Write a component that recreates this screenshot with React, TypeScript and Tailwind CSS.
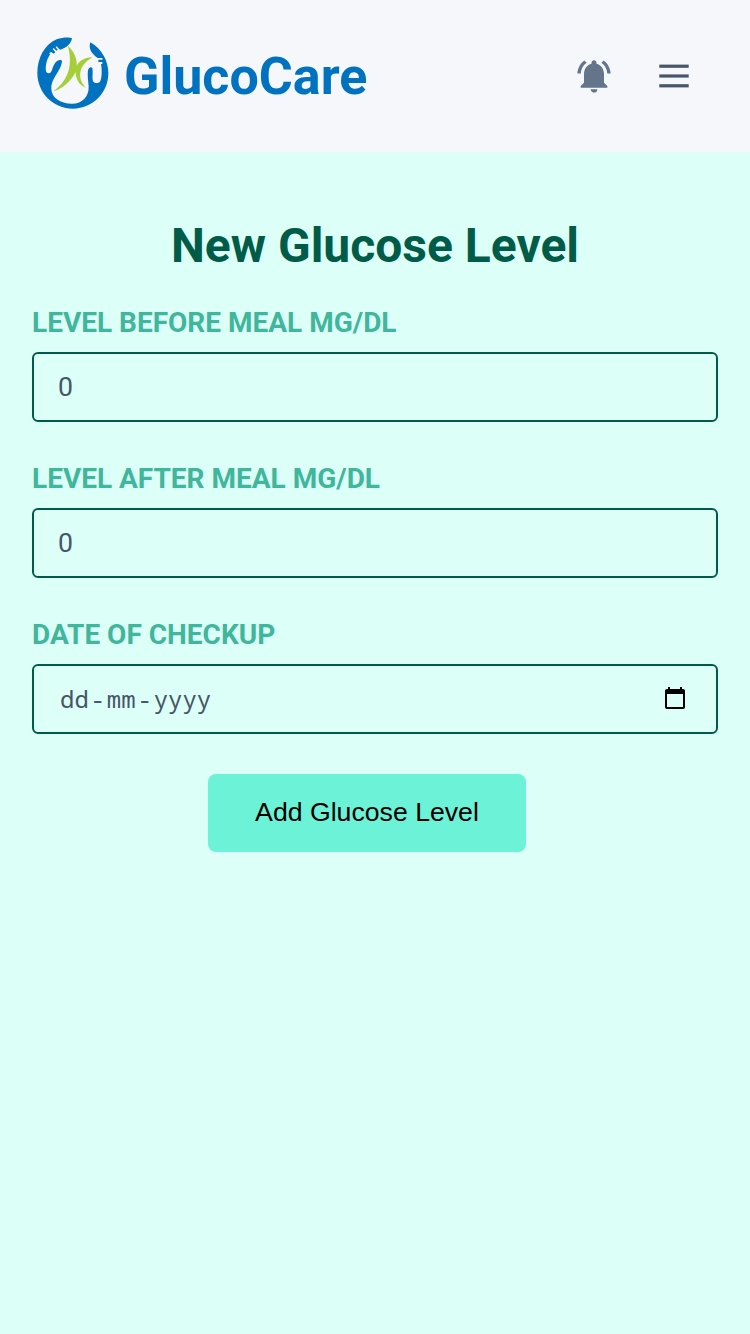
import React from "react";
import { MdNotificationsActive } from "react-icons/md";

function Logo() {
  return (
    <svg viewBox="0 0 255 255" className="size-[85px] shrink-0" aria-hidden="true">
      <path
        fill="#0072bf"
        d="M126 25C119 21 97 22 80 28C44 43 22 84 22 129C22 188 69 236 129 236C188 236 235 188 235 130C235 95 217 57 181 37C175 54 183 70 203 84H217V89H205V96H217V102H213C217 124 215 150 209 156C204 161 194 160 190 155C185 148 190 128 187 115C185 110 178 111 175 118C171 130 175 155 176 170C177 198 158 221 126 221C90 221 65 203 64 177C63 158 73 143 83 127C91 114 98 98 95 91C88 88 77 93 72 104C66 115 66 129 56 130C46 130 46 115 49 100C51 89 55 80 60 74L58 69L64 66L71 71L76 67L68 57L71 54L79 62L83 59L77 52L80 49L90 59C108 55 123 42 126 25Z"
      />
      <path
        fill="#a6ce39"
        d="M113 47C120 68 122 94 117 117C111 143 94 166 70 184C98 177 124 151 137 126C137 145 145 164 168 174C153 158 149 145 151 127C154 109 167 95 187 82C165 81 149 92 140 107C142 86 132 63 113 47Z"
      />
    </svg>
  );
}

function MenuIcon() {
  return (
    <svg viewBox="0 0 40 40" className="size-10 fill-[#475569]" aria-hidden="true">
      <rect x="5.3" y="8.6" width="29.4" height="3.2" />
      <rect x="5.3" y="18.4" width="29.4" height="3.2" />
      <rect x="5.3" y="28.2" width="29.4" height="3.2" />
    </svg>
  );
}

const labelClass =
  "block pt-px text-[28px] leading-10 font-bold uppercase text-[#40b69c]";
const inputClass =
  "mt-[9px] block h-[70px] w-full rounded-[6px] border-2 border-[#005c48] bg-transparent px-6 text-[26.67px] text-[#475569] outline-none placeholder:text-[#475569]";

function LevelField({ id, label }: { id: string; label: string }) {
  return (
    <div>
      <label htmlFor={id} className={labelClass}>{label}</label>
      <input id={id} type="text" inputMode="numeric" defaultValue="0" className={inputClass} />
    </div>
  );
}

export default function App() {
  return (
    <div className="min-h-screen bg-[#dcfff7] font-['Roboto',sans-serif]">
      <header className="flex h-[152px] items-center justify-between bg-[#f5f7fb] pr-14 pl-[30px]">
        <div className="flex items-center gap-[9px]">
          <div className="pb-[7px]"><Logo /></div>
          <span className="pt-0.5 text-[52px] leading-none font-bold text-[#0072bf]">GlucoCare</span>
        </div>
        <div className="flex items-center gap-10">
          <button type="button" aria-label="Notifications">
            <MdNotificationsActive className="size-10 text-[#64748b]" />
          </button>
          <button type="button" aria-label="Menu"><MenuIcon /></button>
        </div>
      </header>
      <main className="px-8 pt-16">
        <h1 className="text-center text-[48px] leading-[60px] font-bold text-[#005c48]">New Glucose Level</h1>
        <form className="mt-[26px] flex flex-col gap-9" onSubmit={(e) => e.preventDefault()}>
          <LevelField id="before" label="Level before meal mg/dl" />
          <LevelField id="after" label="Level after meal mg/dl" />
          <div>
            <span className={labelClass}>Date of checkup</span>
            <button
              type="button"
              className="mt-[9px] flex h-[70px] w-full items-center justify-between rounded-[6px] border-2 border-[#005c48] pr-[29px] pl-[26px]"
            >
              <span className="flex font-['Noto_Sans_Mono','DejaVu_Sans_Mono',monospace] text-2xl text-[#475569]">
                <span>dd</span>
                <span className="px-[1.8px]">-</span>
                <span>mm</span>
                <span className="px-[1.8px]">-</span>
                <span>yyyy</span>
              </span>
              <svg viewBox="0 0 24 24" className="mb-0.5 size-6" aria-hidden="true">
                <path fillRule="evenodd" d="M5 1h2v2h10V1h2v2h1a2 2 0 0 1 2 2v16a2 2 0 0 1-2 2H4a2 2 0 0 1-2-2V5a2 2 0 0 1 2-2h1zM4 8v13h16V8z" />
              </svg>
            </button>
          </div>
          <button
            type="submit"
            className="mt-1 ml-44 h-[78px] w-[318px] rounded-lg bg-[#6cf3d7] pb-0.5 font-['Liberation_Sans',sans-serif] text-[26.67px] text-black"
          >
            Add Glucose Level
          </button>
        </form>
      </main>
    </div>
  );
}
